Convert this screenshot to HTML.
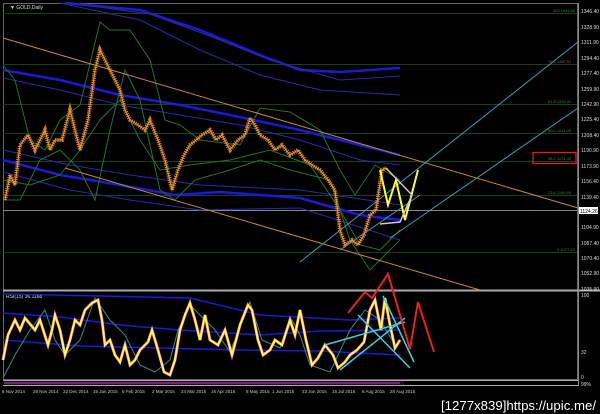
<!DOCTYPE html>
<html><head><meta charset="utf-8"><style>
html,body{margin:0;padding:0;background:#000;width:600px;height:414px;overflow:hidden}
svg{display:block}
text{font-family:"Liberation Sans",sans-serif}
</style></head><body>
<svg width="600" height="414" viewBox="0 0 600 414" xmlns="http://www.w3.org/2000/svg">
<rect width="600" height="414" fill="#000"/>
<rect x="3.5" y="3.5" width="574" height="376" fill="none" stroke="#666" stroke-width="1"/>
<line x1="3" y1="290.5" x2="600" y2="290.5" stroke="#aaa" stroke-width="2"/>
<line x1="3" y1="380.5" x2="578" y2="380.5" stroke="#aaa"/>
<line x1="3" y1="385.5" x2="578" y2="385.5" stroke="#aaa"/>
<line x1="578.5" y1="3" x2="578.5" y2="386" stroke="#888"/>
<g stroke="#164216" stroke-width="1">
<line x1="3" y1="13.5" x2="577" y2="13.5"/><line x1="3" y1="64.5" x2="577" y2="64.5"/>
<line x1="3" y1="104.5" x2="577" y2="104.5"/><line x1="3" y1="133.5" x2="577" y2="133.5"/>
<line x1="3" y1="161.5" x2="577" y2="161.5"/><line x1="3" y1="195.5" x2="577" y2="195.5"/>
<line x1="3" y1="252.5" x2="577" y2="252.5"/>
</g>
<g fill="#3a8a3a" font-size="4">
<text x="553" y="12">100 1346.00</text><text x="548" y="63">76.4 1287.57</text><text x="548" y="103">61.8 1250.52</text><text x="548" y="132">50.0 1211.05</text><text x="548" y="160">38.2 1174.40</text><text x="548" y="194">23.6 1140.95</text><text x="557" y="251">0 1077.22</text>
</g>
<line x1="3" y1="210.5" x2="577" y2="210.5" stroke="#888"/>
<g fill="none" stroke="#1a1ad8" stroke-width="2.5">
<path d="M65 3 L140 10 L200 30 L260 55 L300 70 L340 72 L400 68"/>
<path d="M3 70 L60 80 L120 95 L180 105 L230 115 L300 130 L360 145 L400 155"/>
<path d="M3 160 L60 175 L120 185 L175 195 L220 192 L300 198 L360 215 L400 220"/>
</g>
<g fill="none" stroke="#2a2ab0" stroke-width="1">
<path d="M70 3 L150 14 L210 36 L270 60 L340 80 L400 76"/>
<path d="M3 78 L60 90 L120 105 L180 115 L240 125 L300 140 L360 160 L400 165"/>
<path d="M3 150 L70 165 L130 175 L200 185 L300 190 L400 205"/>
<path d="M3 172 L70 190 L130 200 L200 210 L300 208 L400 240"/>
<path d="M60 3 L140 20 L200 50 L260 75 L320 90 L400 95"/>
</g>
<g fill="none" stroke="#257525" stroke-width="1">
<path d="M3 65 L15 80 L30 140 L45 150 L60 120 L80 105 L100 22 L110 30 L130 30 L150 60 L165 120 L180 125 L200 140 L240 145 L260 108 L290 112 L320 130 L340 170 L355 195 L375 165 L400 180"/>
<path d="M3 200 L20 200 L40 160 L60 150 L80 170 L95 200 L110 130 L125 70 L140 100 L160 190 L175 200 L195 180 L230 170 L260 160 L290 170 L330 180 L350 240 L370 270 L390 250 L400 240"/>
<path d="M3 180 L30 185 L60 175 L80 150 L100 120 L120 100 L140 140 L160 170 L190 165 L230 160 L270 150 L310 165 L340 210 L360 245 L380 250 L400 230"/>
</g>
<g stroke="#c88a2a" stroke-width="1" fill="none">
<line x1="3" y1="38" x2="578" y2="208"/>
<line x1="65" y1="168" x2="480" y2="290"/>
</g>
<g stroke="#3a9fc0" stroke-width="1" fill="none">
<line x1="300" y1="262" x2="578" y2="42"/>
<line x1="390" y1="238" x2="578" y2="108"/>
<line x1="340" y1="250" x2="420" y2="195"/>
</g>
<polyline fill="none" stroke="#d07a20" stroke-width="4" stroke-dasharray="1.2 1" points="5,200 10,175 15,185 20,145 28,135 35,150 45,130 50,150 55,140 62,140 70,110 75,130 80,150 88,120 95,70 100,50 105,60 110,70 115,80 120,90 125,110 130,120 138,125 145,130 150,120 158,140 165,160 172,190 178,170 184,155 190,145 196,140 202,135 210,130 216,140 222,135 230,150 238,140 245,135 250,118 255,125 260,135 268,140 275,150 282,145 290,155 298,150 305,160 312,165 320,170 328,180 335,190 340,230 345,245 352,240 358,245 364,235 370,215 376,210 382,170 386,168"/>
<polyline fill="none" stroke="#f09a30" stroke-width="1" points="5,200 10,175 15,185 20,145 28,135 35,150 45,130 50,150 55,140 62,140 70,110 75,130 80,150 88,120 95,70 100,50 105,60 110,70 115,80 120,90 125,110 130,120 138,125 145,130 150,120 158,140 165,160 172,190 178,170 184,155 190,145 196,140 202,135 210,130 216,140 222,135 230,150 238,140 245,135 250,118 255,125 260,135 268,140 275,150 282,145 290,155 298,150 305,160 312,165 320,170 328,180 335,190 340,230 345,245 352,240 358,245 364,235 370,215 376,210 382,170 386,168"/>
<polyline fill="none" stroke="#ffff33" stroke-width="2" points="380,170 388,205 396,180 405,220 418,170"/>
<polyline fill="none" stroke="#ccc" stroke-width="1.5" points="386,168 412,195 400,222 380,224"/>
<g fill="#ddd" font-size="5">
<text x="581" y="13">1346.40</text><text x="581" y="29">1328.90</text><text x="581" y="44">1311.90</text><text x="581" y="60">1294.40</text><text x="581" y="75">1277.40</text><text x="581" y="91">1259.90</text><text x="581" y="106">1242.90</text><text x="581" y="121">1225.40</text><text x="581" y="137">1208.40</text><text x="581" y="152">1190.90</text><text x="581" y="168">1173.90</text><text x="581" y="183">1156.40</text><text x="581" y="199">1139.40</text><text x="581" y="229">1104.90</text><text x="581" y="245">1087.40</text><text x="581" y="260">1070.40</text><text x="581" y="275">1052.90</text><text x="581" y="291">1035.90</text>
<text x="581" y="297">100</text><text x="581" y="354">32</text><text x="581" y="379">0</text>
</g>
<rect x="579" y="207" width="19" height="7" fill="#fff"/>
<text x="580" y="213" font-size="5" fill="#000">1124.26</text>
<rect x="533" y="152.5" width="43" height="11" fill="none" stroke="#e02020" stroke-width="1.3"/>
<text x="10" y="9" font-size="5" fill="#ddd">▼ GOLD,Daily</text>
<text x="6" y="298" font-size="5" fill="#ddd">RSI(15) 36.1168</text>
<g fill="none" stroke="#1a1ad8" stroke-width="1.5">
<path d="M3 294 L100 296 L190 298 L260 315 L350 320 L400 318"/>
<path d="M3 313 L60 317 L120 325 L180 330 L260 335 L320 331 L400 330"/>
<path d="M3 340 L80 346 L160 348 L240 350 L320 351 L400 355"/>
</g>
<polyline fill="none" stroke="#3a8a8a" stroke-width="1" points="3,378 15,355 30,330 45,310 55,340 65,355 80,340 95,298 110,320 125,335 140,365 155,372 170,360 178,330 190,305 200,315 215,330 230,352 250,302 262,340 280,348 292,320 300,335 310,365 330,372 350,330 365,310 380,320 395,345"/>
<polyline fill="none" stroke="#e040e0" stroke-width="3" points="3,360 8,335 15,320 20,330 25,318 35,330 40,320 48,345 52,330 55,315 60,330 65,355 70,340 75,320 80,325 85,310 92,303 98,300 102,320 105,345 110,340 115,355 120,362 125,345 130,365 135,360 140,350 148,342 152,330 158,350 164,372 170,375 175,360 180,330 185,315 190,303 195,320 200,340 205,315 210,340 218,345 225,330 232,355 240,325 248,305 252,310 258,340 263,355 270,350 275,340 282,345 290,320 295,335 300,310 306,340 312,365 318,358 325,345 333,355 338,368 345,362 350,355 357,350 364,342 370,310 375,300 381,330 385,298 390,325 395,348 400,340"/>
<polyline fill="none" stroke="#ffff33" stroke-width="2" points="3,360 8,335 15,320 20,330 25,318 35,330 40,320 48,345 52,330 55,315 60,330 65,355 70,340 75,320 80,325 85,310 92,303 98,300 102,320 105,345 110,340 115,355 120,362 125,345 130,365 135,360 140,350 148,342 152,330 158,350 164,372 170,375 175,360 180,330 185,315 190,303 195,320 200,340 205,315 210,340 218,345 225,330 232,355 240,325 248,305 252,310 258,340 263,355 270,350 275,340 282,345 290,320 295,335 300,310 306,340 312,365 318,358 325,345 333,355 338,368 345,362 350,355 357,350 364,342 370,310 375,300 381,330 385,298 390,325 395,348 400,340"/>
<g stroke="#40d0e0" stroke-width="1.5" fill="none">
<line x1="340" y1="370" x2="405" y2="318"/>
<line x1="325" y1="345" x2="405" y2="322"/>
<line x1="358" y1="315" x2="410" y2="368"/>
<line x1="383" y1="296" x2="414" y2="362"/>
</g>
<polyline fill="none" stroke="#ee2020" stroke-width="2" points="348,313 365,292 372,298 388,274 410,349 418,302 434,352"/>
<rect x="4" y="381" width="400" height="4" fill="#2a0a2a"/>
<line x1="4" y1="383" x2="400" y2="383" stroke="#c040c0" stroke-width="1"/>
<text x="581" y="386" font-size="5" fill="#ddd">99%</text>
<g fill="#ccc" font-size="4.5">
<text x="2" y="393">6 Nov 2014</text><text x="33" y="393">28 Nov 2014</text><text x="63" y="393">22 Dec 2014</text><text x="93" y="393">15 Jan 2015</text><text x="122" y="393">6 Feb 2015</text><text x="152" y="393">2 Mar 2015</text><text x="181" y="393">24 Mar 2015</text><text x="211" y="393">16 Apr 2015</text><text x="246" y="393">8 May 2015</text><text x="272" y="393">1 Jun 2015</text><text x="302" y="393">23 Jun 2015</text><text x="332" y="393">15 Jul 2015</text><text x="362" y="393">6 Aug 2015</text><text x="390" y="393">28 Aug 2015</text>
</g>
<text x="441" y="410" font-size="13" fill="#fff" font-family="DejaVu Sans Mono, monospace" textLength="155" lengthAdjust="spacingAndGlyphs">[1277x839]https://upic.me/</text>
</svg>
</body></html>
